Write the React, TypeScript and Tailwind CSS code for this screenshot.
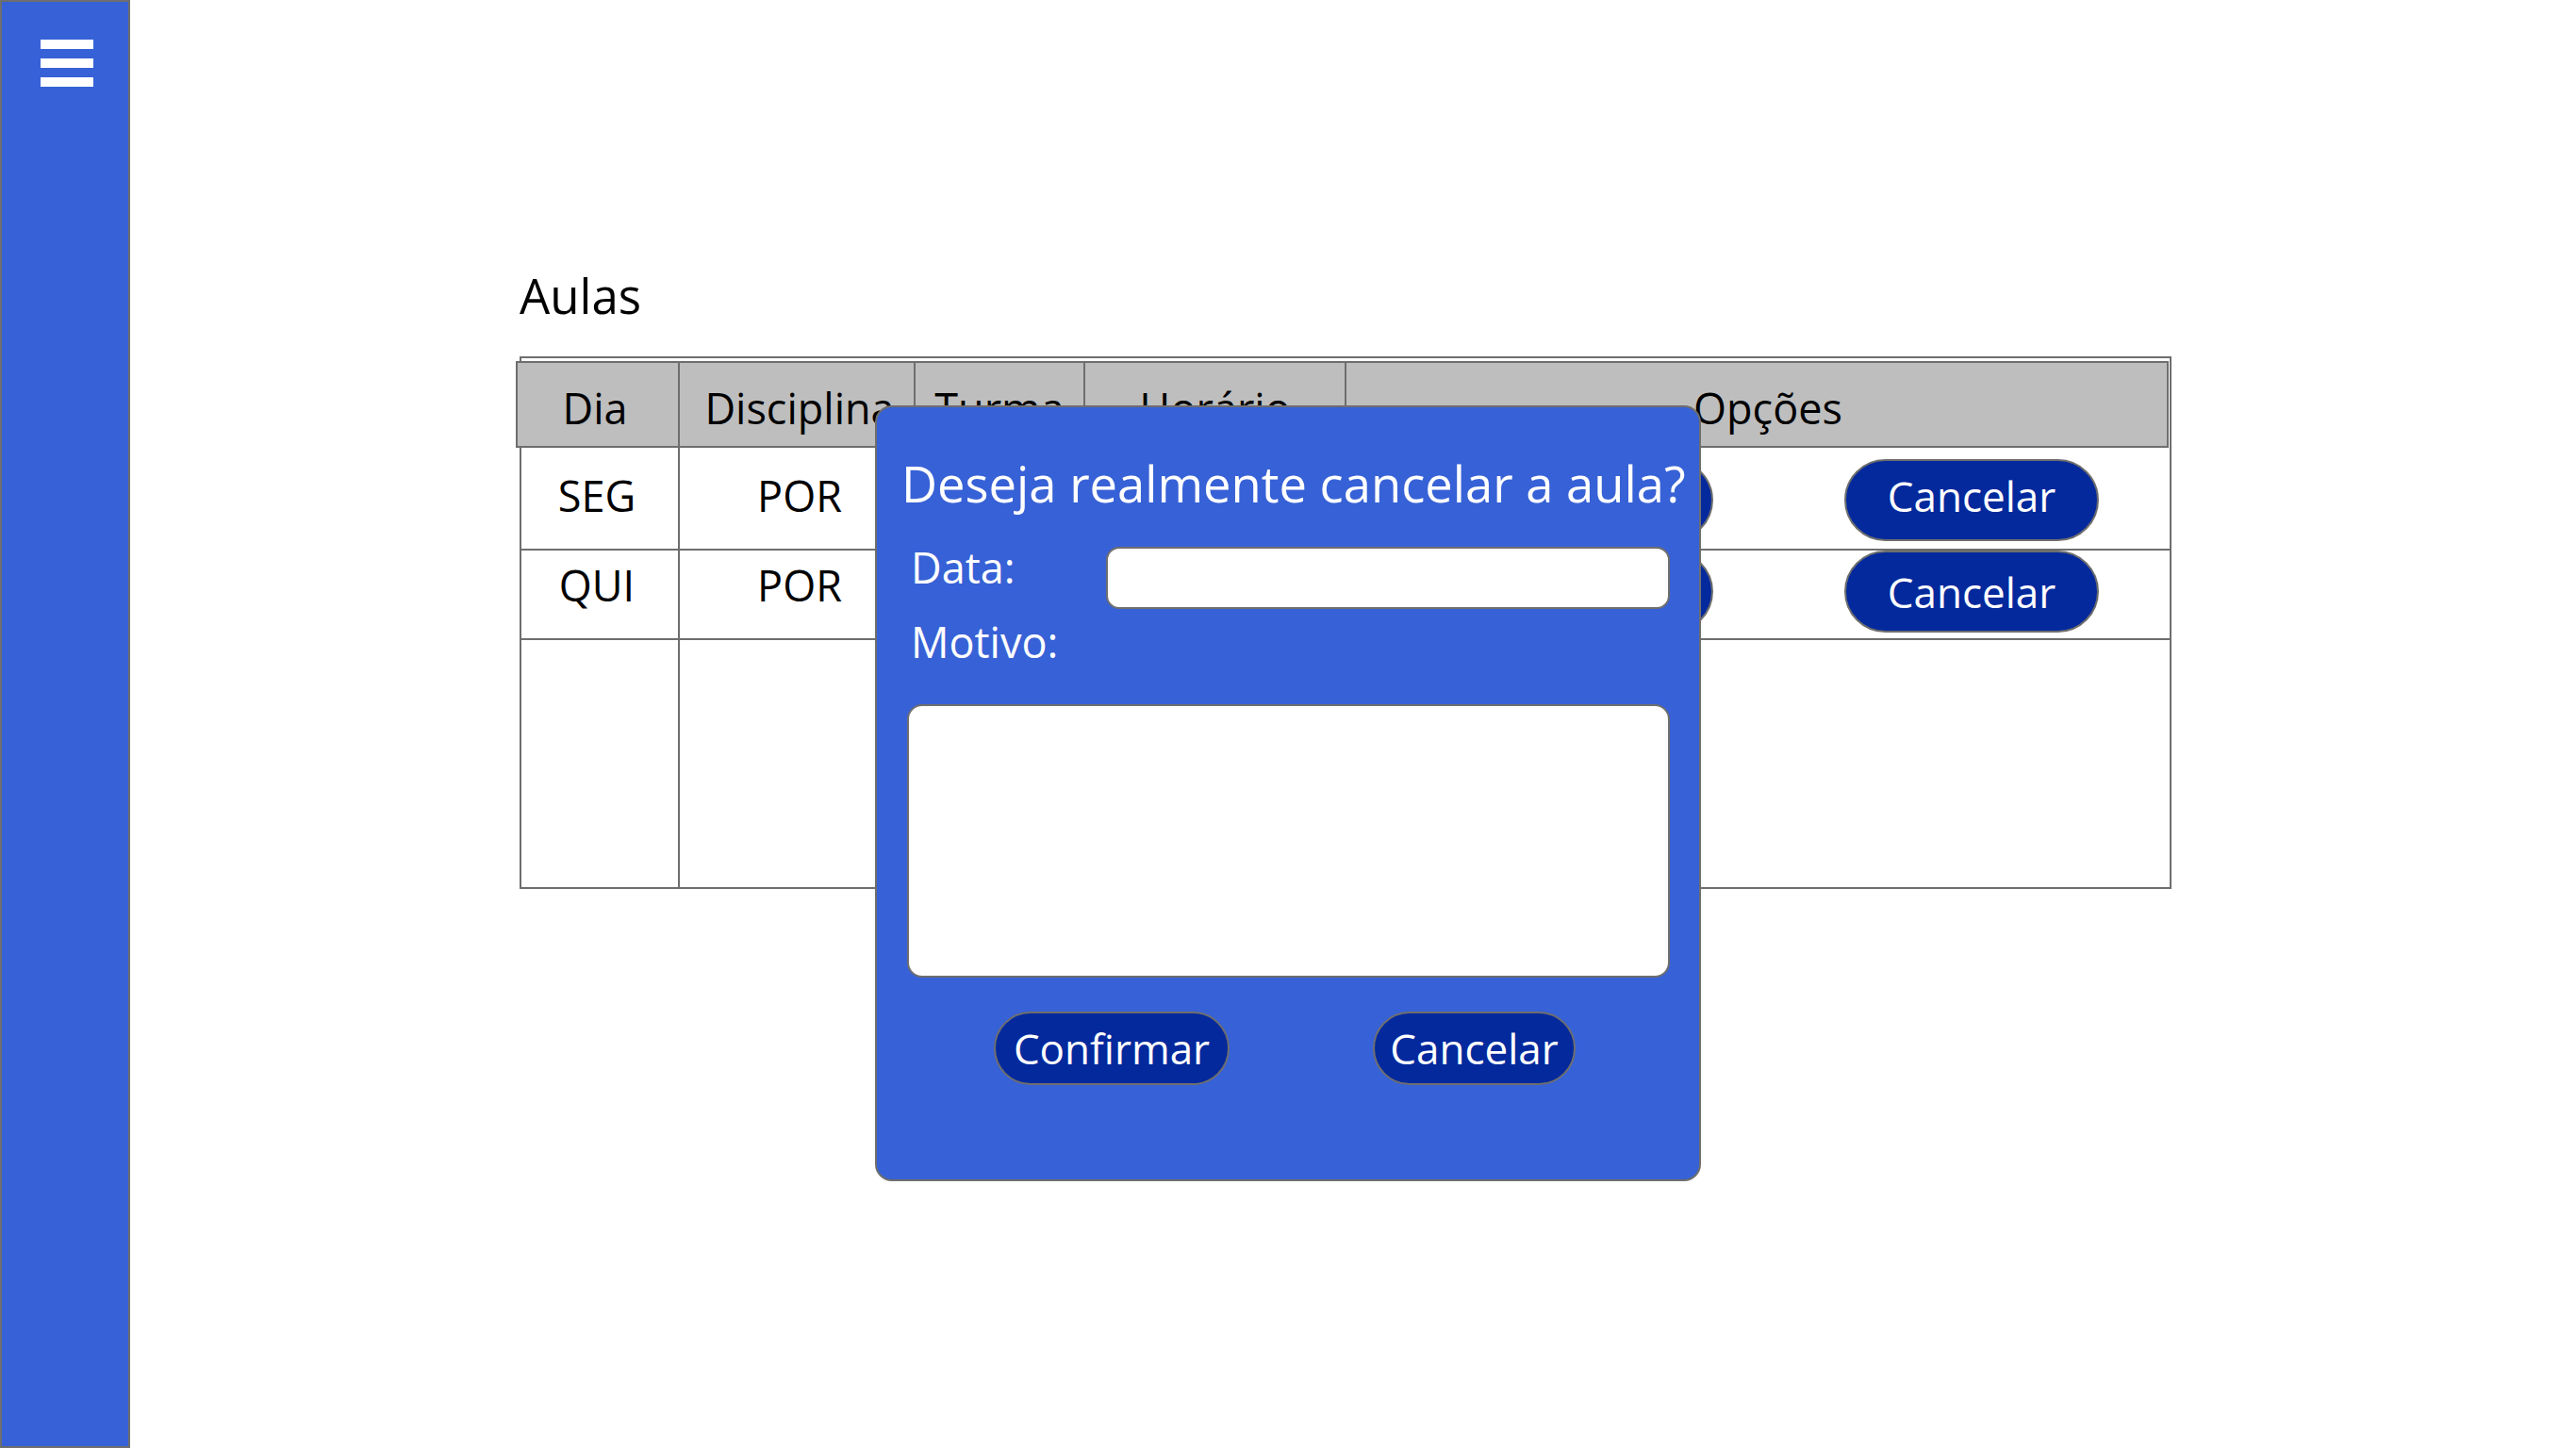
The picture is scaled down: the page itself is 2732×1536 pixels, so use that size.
const aulas = [
  { dia: 'SEG', disciplina: 'POR', turma: '1A', horario: '07:30', pad: 'pt-[28px]', btn: 'pt-[12px]', lift: 'pb-[10px]', h: 'h-[109px]' },
  { dia: 'QUI', disciplina: 'POR', turma: '2B', horario: '09:10', pad: 'pt-[14px]', btn: 'pt-0', lift: 'pb-0', h: 'h-[95px]' },
];

function Pill({ label, className }: { label: string; className: string }) {
  return (
    <button
      className={`flex shrink-0 items-center justify-center rounded-full border-2 border-[#6e6e6e] bg-[#03299d] text-[44px] leading-none text-white ${className}`}
    >
      {label}
    </button>
  );
}

export default function App() {
  return (
    <div className="relative flex h-screen w-full overflow-hidden bg-white font-['Open_Sans',sans-serif] text-black">
      {/* sidebar */}
      <aside className="h-screen w-[138px] shrink-0 border-2 border-[#6e6e6e] bg-[#3761d6]">
        <div className="ml-[41px] mt-[40px] flex w-[56px] flex-col gap-[10px]">
          <span className="h-[10px] bg-white" />
          <span className="h-[10px] bg-white" />
          <span className="h-[10px] bg-white" />
        </div>
      </aside>

      <main className="pl-[413px] pt-[288px]">
        <h1 className="text-[51px] leading-none">Aulas</h1>

        <div className="mt-[39px] flex h-[565px] w-[1752px] flex-col border-2 border-[#6e6e6e]">
          <div className="-ml-[6px] mt-[3px] grid h-[92px] w-[1753px] shrink-0 grid-cols-[172px_250px_180px_277px_1fr] border-2 border-[#6e6e6e] bg-[#bebebe] text-[45px] leading-none">
            <div className="flex justify-center border-r-2 border-[#6e6e6e] pr-[6px] pt-[25px]">Dia</div>
            <div className="flex justify-center border-r-2 border-[#6e6e6e] pl-[6px] pt-[25px]">Disciplina</div>
            <div className="flex justify-center border-r-2 border-[#6e6e6e] pt-[25px]">Turma</div>
            <div className="flex justify-center border-r-2 border-[#6e6e6e] pt-[25px]">Horário</div>
            <div className="flex justify-center pl-[24px] pt-[25px]">Opções</div>
          </div>

          {aulas.map((a) => (
            <div
              key={a.dia}
              className={`grid shrink-0 grid-cols-[168px_250px_180px_277px_1fr] border-b-2 border-[#6e6e6e] text-[45px] leading-none ${a.h}`}
            >
              <div className={`flex justify-center border-r-2 border-[#6e6e6e] pr-[6px] ${a.pad}`}>{a.dia}</div>
              <div className={`flex justify-center border-r-2 border-[#6e6e6e] pl-[6px] ${a.pad}`}>{a.disciplina}</div>
              <div className={`flex justify-center border-r-2 border-[#6e6e6e] ${a.pad}`}>{a.turma}</div>
              <div className={`flex justify-center border-r-2 border-[#6e6e6e] ${a.pad}`}>{a.horario}</div>
              <div className={`flex justify-end gap-[139px] pr-[75px] ${a.btn}`}>
                <Pill label="Editar" className={`h-[87px] w-[270px] ${a.lift}`} />
                <Pill label="Cancelar" className={`h-[87px] w-[270px] ${a.lift}`} />
              </div>
            </div>
          ))}

          <div className="grid flex-1 grid-cols-[168px_250px_180px_277px_1fr]">
            <div className="border-r-2 border-[#6e6e6e]" />
            <div className="border-r-2 border-[#6e6e6e]" />
            <div className="border-r-2 border-[#6e6e6e]" />
            <div className="border-r-2 border-[#6e6e6e]" />
            <div />
          </div>
        </div>
      </main>

      {/* modal */}
      <div className="absolute left-[928px] top-[430px] h-[823px] w-[876px] rounded-[18px] border-2 border-[#6e6e6e] bg-[#3761d6] pl-[33px] pt-[55px] text-white">
        <h2 className="-ml-[7px] whitespace-nowrap text-[52.5px] leading-none">Deseja realmente cancelar a aula?</h2>

        <div className="mt-[40px] flex items-start">
          <label className="-mt-px ml-[3px] w-[207px] text-[45px] leading-none">Data:</label>
          <input className="h-[66px] w-[598px] rounded-[14px] border-2 border-[#6e6e6e] bg-white outline-none" />
        </div>

        <div className="ml-[3px] mt-[12px] text-[45px] leading-none">Motivo:</div>

        <textarea className="-ml-[1px] mt-[44px] block h-[290px] w-[809px] resize-none rounded-[16px] border-2 border-[#6e6e6e] bg-white outline-none" />

        <div className="mt-[36px] flex gap-[152px] pl-[91px]">
          <Pill label="Confirmar" className="h-[78px] w-[250px]" />
          <Pill label="Cancelar" className="h-[78px] w-[215px]" />
        </div>
      </div>
    </div>
  );
}
